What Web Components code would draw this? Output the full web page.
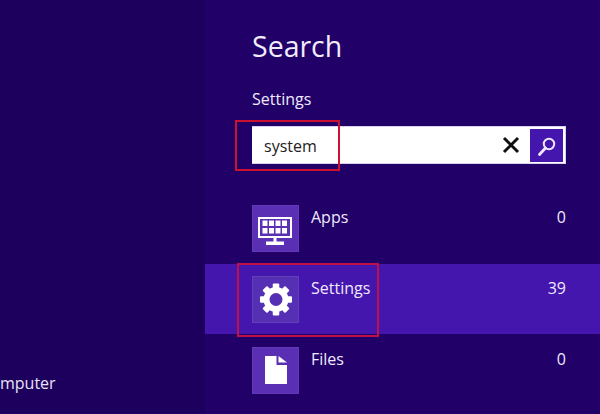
<!DOCTYPE html>
<html><head><meta charset="utf-8"><style>html,body{margin:0;padding:0;height:100%;overflow:hidden;background:#1d005e}</style></head><body>
<search-screen></search-screen>
<script>
const FONT='"Open Sans","Noto Sans",sans-serif';
class ResultRow extends HTMLElement{
  connectedCallback(){
    const active=this.hasAttribute('active');
    const r=this.attachShadow({mode:'open'});
    r.innerHTML=`<style>
    :host{display:block;height:${this.getAttribute('h')||71}px;box-sizing:border-box;padding:${this.getAttribute('pad')||12}px 34px 0 47px;background:${active?'#4516ae':'transparent'};font-family:${FONT};color:#efe9fb}
    .row{display:flex;align-items:flex-start}
    .tile{width:47px;height:47px;background:${active?'#5630b4':'#5a2fb3'};box-shadow:inset 0 0 0 1px ${active?'#6240b9':'#6238b8'};flex:none}
    .name{margin-left:12px;flex:1;font-size:16px;line-height:22px;margin-top:1px}
    .count{font-size:16px;line-height:22px;margin-top:1px}
    ::slotted(svg){display:block}
    </style><div class="row"><div class="tile"><slot></slot></div><div class="name">${this.getAttribute('name')}</div><div class="count">${this.getAttribute('count')}</div></div>`;
  }
}
customElements.define('result-row',ResultRow);
class SearchBox extends HTMLElement{
  connectedCallback(){
    const r=this.attachShadow({mode:'open'});
    r.innerHTML=`<style>
    :host{display:flex;align-items:center;height:38px;box-sizing:border-box;background:#fff;border:1px solid #d8d2ee;border-left:0;padding-right:2px;font-family:${FONT}}
    .v{flex:1;padding:2px 0 0 12px;font-size:16px;line-height:22px;color:#222}
    .x{display:block;margin-right:10px}
    .go{width:33px;height:33px;background:#4516ae}
    svg{display:block}
    </style><div class="v">system</div>
    <svg class="x" width="18" height="18" viewBox="0 0 18 18"><path d="M2 2L16 16M16 2L2 16" stroke="#111" stroke-width="3" fill="none"/></svg>
    <div class="go"><svg width="33" height="33" viewBox="0 0 33 33"><circle cx="19" cy="15" r="5.200" fill="none" stroke="#efe6fb" stroke-width="2"/><path d="M15.500 19L9.500 25.500" stroke="#efe6fb" stroke-width="2.800" stroke-linecap="round"/></svg></div>`;
  }
}
customElements.define('search-box',SearchBox);
class SearchScreen extends HTMLElement{
  connectedCallback(){
    const r=this.attachShadow({mode:'open'});
    r.innerHTML=`<style>
    :host{display:flex;position:relative;width:600px;height:414px;overflow:hidden;font-family:${FONT}}
    .left{width:205px;flex:none;background:#1d005e;display:flex;flex-direction:column;justify-content:flex-end;color:#e9e3f6;font-size:16px;line-height:22px;padding-bottom:20px;box-sizing:border-box}
    .pane{flex:1;background:#210068;color:#efe9fb;display:flex;flex-direction:column}
    .head{padding:27px 34px 0 47px}
    h1{margin:0;font-weight:400;font-size:28.500px;line-height:38px;color:#f1ecfb}
    .label{font-size:16px;line-height:22px;margin-top:23px}
    search-box{margin-top:16px}
    .list{margin-top:29px}
    .mark{position:absolute;box-sizing:border-box;border:2px solid #cb1030;pointer-events:none}
    </style>
    <div class="left"><span>mputer</span></div>
    <div class="pane">
      <div class="head"><h1>Search</h1><div class="label">Settings</div><search-box></search-box></div>
      <div class="list">
        <result-row name="Apps" count="0"><svg width="47" height="47" viewBox="0 0 47 47"><path fill="none" stroke="#fff" stroke-width="2" d="M7 13h32v19H7z"/><path fill="#fff" d="M10.500 15.500h5v5.500h-5zM17 15.500h5v5.500h-5zM23.500 15.500h5v5.500h-5zM30 15.500h5v5.500h-5zM10.500 23h5v5.500h-5zM17 23h5v5.500h-5zM23.500 23h5v5.500h-5zM30 23h5v5.500h-5zM21.500 33h3v4h-3zM14 36.500h18v3.500H14z"/></svg></result-row>
        <result-row active name="Settings" count="39" h="70"><svg width="47" height="47" viewBox="0 0 47 47"><g fill="#fff" transform="translate(24 23.500)"><rect x="-3.250" y="-16" width="6.500" height="7" rx="1"/><rect x="-3.250" y="-16" width="6.500" height="7" rx="1" transform="rotate(45)"/><rect x="-3.250" y="-16" width="6.500" height="7" rx="1" transform="rotate(90)"/><rect x="-3.250" y="-16" width="6.500" height="7" rx="1" transform="rotate(135)"/><rect x="-3.250" y="-16" width="6.500" height="7" rx="1" transform="rotate(180)"/><rect x="-3.250" y="-16" width="6.500" height="7" rx="1" transform="rotate(225)"/><rect x="-3.250" y="-16" width="6.500" height="7" rx="1" transform="rotate(270)"/><rect x="-3.250" y="-16" width="6.500" height="7" rx="1" transform="rotate(315)"/><circle r="9.500" fill="none" stroke="#fff" stroke-width="6"/></g></svg></result-row>
        <result-row name="Files" count="0" pad="13"><svg width="47" height="47" viewBox="0 0 47 47"><path fill="#fff" d="M13 9h11.500v9H35v19H13zM26.500 9L35 15.500h-8.500z"/></svg></result-row>
      </div>
    </div>
    <div class="mark" style="left:235px;top:120px;width:105px;height:51px"></div>
    <div class="mark" style="left:237px;top:263px;width:142px;height:74px;border-color:#c01048"></div>`;
  }
}
customElements.define('search-screen',SearchScreen);
</script></body></html>
